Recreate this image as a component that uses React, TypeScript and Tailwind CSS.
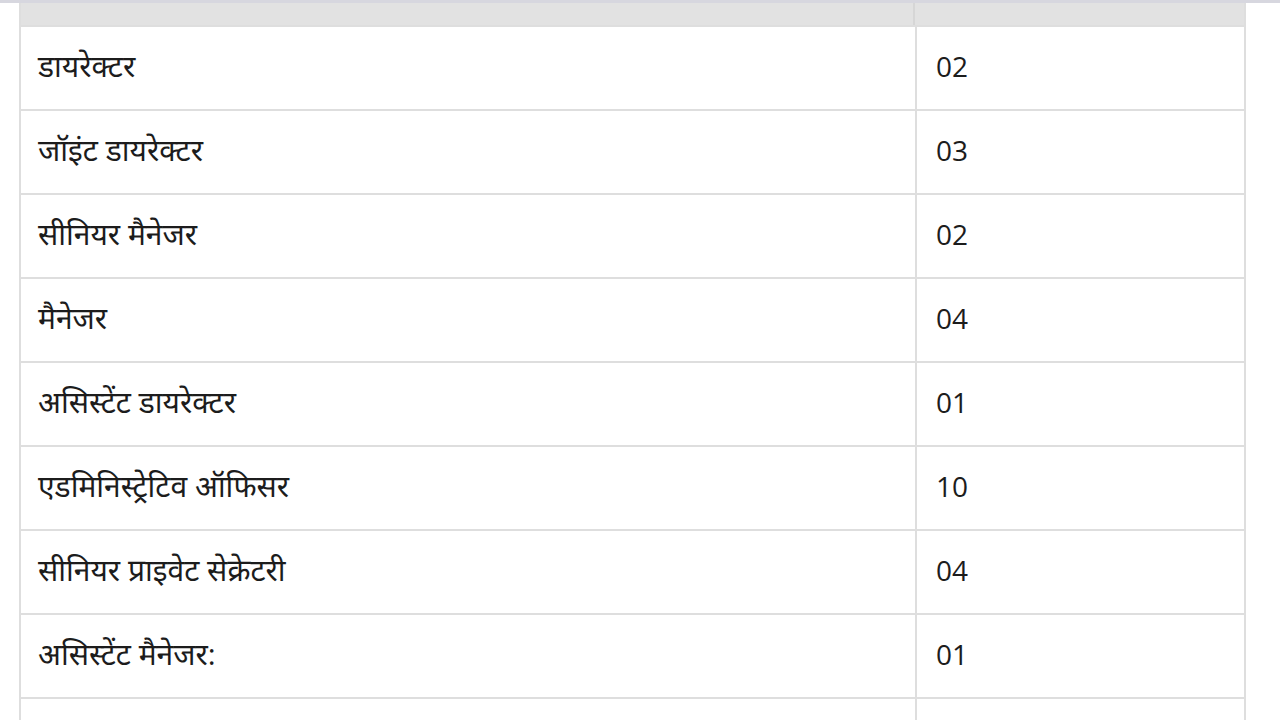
const rows: [string, string][] = [
  ['डायरेक्टर', '02'],
  ['जॉइंट डायरेक्टर', '03'],
  ['सीनियर मैनेजर', '02'],
  ['मैनेजर', '04'],
  ['असिस्टेंट डायरेक्टर', '01'],
  ['एडमिनिस्ट्रेटिव ऑफिसर', '10'],
  ['सीनियर प्राइवेट सेक्रेटरी', '04'],
  ['असिस्टेंट मैनेजर:', '01'],
  ['', ''],
];

export default function App() {
  return (
    <div className="h-[720px] w-[1280px] overflow-hidden bg-white text-[#1c1c1c] [font-family:'Open_Sans','Noto_Sans','Noto_Sans_Devanagari',sans-serif]">
      <div className="h-[3px] bg-[#d7d7df]" />
      <div className="ml-[19px] w-[1227px] border-x-2 border-[#dedede]">
        {/* header row, mostly cut off */}
        <div className="flex h-[22px] bg-[#e2e2e2]">
          <div className="w-[894px] border-r-2 border-[#d6d6d6]" />
          <div className="flex-1" />
        </div>
        {rows.map(([post, count], i) => (
          <div key={i} className="flex h-[84px] border-t-2 border-[#dedede]">
            <div className="flex w-[896px] items-center border-r-2 border-[#dedede] pb-[5px] pl-[17px] text-[30px]">
              {post}
            </div>
            <div className="flex flex-1 items-center pb-[4px] pl-[19px] text-[28px]">{count}</div>
          </div>
        ))}
      </div>
    </div>
  );
}
